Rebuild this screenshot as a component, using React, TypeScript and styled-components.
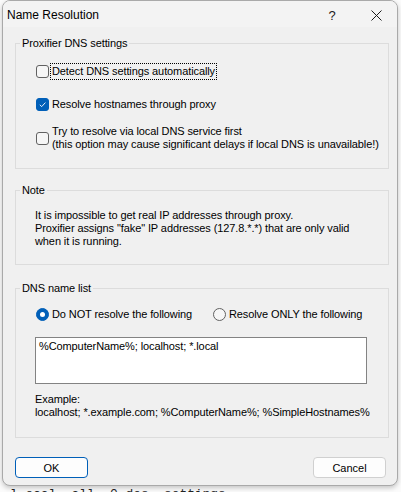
import React from 'react';
import styled, { createGlobalStyle } from 'styled-components';

const GlobalStyle = createGlobalStyle`
  html, body {
    margin: 0;
    padding: 0;
    background: #fbfbfb;
  }
  body {
    font-family: "Liberation Sans", Arial, sans-serif;
    font-size: 11px;
    letter-spacing: -0.1px;
    color: #000;
  }
`;

const Screen = styled.div`
  width: 401px;
  height: 492px;
  overflow: hidden;
  display: flex;
  flex-direction: column;
`;

const Dialog = styled.div`
  margin-left: 2px;
  width: 396px;
  height: 486px;
  flex: none;
  box-sizing: border-box;
  border: 1px solid #a9a9a9;
  border-radius: 8px;
  background: #f0f0f0;
  box-shadow: 0 2px 5px rgba(0, 0, 0, 0.22);
  display: flex;
  flex-direction: column;
  overflow: hidden;
`;

const TitleBar = styled.div`
  height: 26px;
  flex: none;
  display: flex;
  align-items: center;
  background: #f3f3f3;
`;

const Title = styled.span`
  flex: 1;
  padding: 2px 0 0 4px;
  font-size: 12px;
  letter-spacing: 0;
`;

const CaptionButton = styled.div<{ $w: number }>`
  width: ${p => p.$w}px;
  height: 100%;
  display: flex;
  align-items: center;
  justify-content: center;
  font-size: 13px;
  color: #1b1b1b;
  padding-top: 2px;
  box-sizing: border-box;
`;

const Body = styled.div`
  padding: 9px 8px 0 12px;
  display: flex;
  flex-direction: column;
`;

const Group = styled.fieldset<{ $mt?: number }>`
  margin: ${p => p.$mt ?? 0}px 0 0 0;
  padding: 0;
  border: 1px solid #dcdcdc;
  min-width: 0;
`;

const Legend = styled.legend`
  margin-left: 4px;
  padding: 0 2px;
  line-height: 14px;
`;

const GroupBody = styled.div<{ $pt: number; $pb: number }>`
  padding: ${p => p.$pt}px 0 ${p => p.$pb}px 19px;
  display: flex;
  flex-direction: column;
  white-space: nowrap;
`;

const OptionRow = styled.label<{ $mt?: number }>`
  margin: ${p => p.$mt ?? 0}px 0 0 1px;
  min-height: 16px;
  display: flex;
  align-items: center;
  gap: 2px;
`;

const CheckBox = styled.span<{ $checked?: boolean }>`
  width: 13px;
  height: 13px;
  flex: none;
  box-sizing: border-box;
  border-radius: 3px;
  border: 1px solid ${p => (p.$checked ? '#005fb8' : '#616161')};
  background: ${p => (p.$checked ? '#005fb8' : '#f6f6f6')};
  display: flex;
  align-items: center;
  justify-content: center;
`;

const RadioDot = styled.span<{ $checked?: boolean }>`
  width: 13px;
  height: 13px;
  flex: none;
  box-sizing: border-box;
  border-radius: 50%;
  border: 1px solid ${p => (p.$checked ? '#005fb8' : '#616161')};
  background: ${p => (p.$checked ? '#005fb8' : '#f6f6f6')};
  display: flex;
  align-items: center;
  justify-content: center;

  &::after {
    content: '';
    display: ${p => (p.$checked ? 'block' : 'none')};
    width: 5px;
    height: 5px;
    border-radius: 50%;
    background: #fff;
  }
`;

const Caption = styled.span<{ $focused?: boolean }>`
  line-height: 13px;
  padding: 1px 1px;
  outline: ${p => (p.$focused ? '1px dotted #000' : 'none')};
`;

const Text = styled.div<{ $mt?: number }>`
  margin-top: ${p => p.$mt ?? 0}px;
  line-height: 13px;
`;

const RadioLine = styled.div`
  display: flex;
  align-items: center;
`;

const RadioSlot = styled.div<{ $w?: number }>`
  width: ${p => (p.$w ? `${p.$w}px` : 'auto')};
  flex: none;
`;

const NameList = styled.textarea`
  margin: 15px 0 0 0;
  width: 332px;
  height: 47px;
  box-sizing: border-box;
  border: 1px solid #838383;
  border-radius: 0;
  background: #fff;
  padding: 2px 3px;
  font-family: "Liberation Sans", Arial, sans-serif;
  font-size: 11px;
  letter-spacing: -0.1px;
  line-height: 13px;
  color: #000;
  resize: none;
  outline: none;
  display: block;
`;

const Footer = styled.div`
  margin-top: 19px;
  padding: 0 11px 0 12px;
  display: flex;
  justify-content: space-between;
`;

const Button = styled.button<{ $default?: boolean }>`
  width: 73px;
  height: 21px;
  box-sizing: border-box;
  border-radius: 4px;
  border: 1px solid ${p => (p.$default ? '#005fb8' : '#d0d0d0')};
  background: #fdfdfd;
  font-family: "Liberation Sans", Arial, sans-serif;
  font-size: 11px;
  color: #000;
  padding: 0;
`;

const Backdrop = styled.div`
  height: 6px;
  flex: none;
  overflow: hidden;
  padding-left: 10px;
  font-family: "Liberation Mono", monospace;
  font-size: 13px;
  line-height: 15px;
  padding-top: 1px;
  box-sizing: border-box;
  color: #222;
  white-space: pre;
`;

const Check = () => (
  <svg width="9" height="9" viewBox="0 0 9 9">
    <path d="M1.8 4.8 L3.7 6.6 L7.4 2.6" fill="none" stroke="#fff" strokeWidth="0.9" />
  </svg>
);

const CloseIcon = () => (
  <svg width="11" height="11" viewBox="0 0 11 11">
    <path d="M0.5 0.5 L10.5 10.5 M10.5 0.5 L0.5 10.5" stroke="#1b1b1b" strokeWidth="1" />
  </svg>
);

const App = () => {
  return (
    <Screen>
      <GlobalStyle />
      <Dialog>
        <TitleBar>
          <Title>Name Resolution</Title>
          <CaptionButton $w={46}>?</CaptionButton>
          <CaptionButton $w={42}>
            <CloseIcon />
          </CaptionButton>
        </TitleBar>

        <Body>
          <Group>
            <Legend>Proxifier DNS settings</Legend>
            <GroupBody $pt={13} $pb={16}>
              <OptionRow>
                <CheckBox />
                <Caption $focused>Detect DNS settings automatically</Caption>
              </OptionRow>
              <OptionRow $mt={17}>
                <CheckBox $checked>
                  <Check />
                </CheckBox>
                <Caption>Resolve hostnames through proxy</Caption>
              </OptionRow>
              <OptionRow $mt={12}>
                <CheckBox />
                <Caption>
                  Try to resolve via local DNS service first
                  <br />
                  (this option may cause significant delays if local DNS is unavailable!)
                </Caption>
              </OptionRow>
            </GroupBody>
          </Group>

          <Group $mt={14}>
            <Legend>Note</Legend>
            <GroupBody $pt={12} $pb={16}>
              <Text>
                It is impossible to get real IP addresses through proxy.
                <br />
                Proxifier assigns "fake" IP addresses (127.8.*.*) that are only valid
                <br />
                when it is running.
              </Text>
            </GroupBody>
          </Group>

          <Group $mt={16}>
            <Legend>DNS name list</Legend>
            <GroupBody $pt={11} $pb={18}>
              <RadioLine>
                <RadioSlot $w={177}>
                  <OptionRow>
                    <RadioDot $checked />
                    <Caption>Do NOT resolve the following</Caption>
                  </OptionRow>
                </RadioSlot>
                <RadioSlot>
                  <OptionRow>
                    <RadioDot />
                    <Caption>Resolve ONLY the following</Caption>
                  </OptionRow>
                </RadioSlot>
              </RadioLine>
              <NameList readOnly value="%ComputerName%; localhost; *.local" />
              <Text $mt={9}>
                Example:
                <br />
                localhost; *.example.com; %ComputerName%; %SimpleHostnames%
              </Text>
            </GroupBody>
          </Group>
        </Body>

        <Footer>
          <Button $default>OK</Button>
          <Button>Cancel</Button>
        </Footer>
      </Dialog>
      <Backdrop>l ocal  all  0 des  settings</Backdrop>
    </Screen>
  );
};

export default App;
